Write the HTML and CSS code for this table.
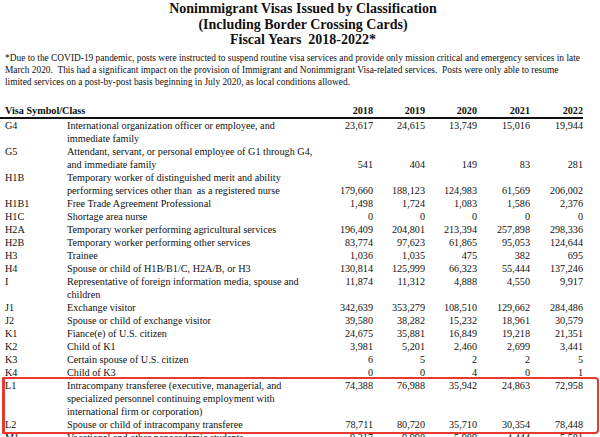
FILE: index.html
```html
<!DOCTYPE html>
<html>
<head>
<meta charset="utf-8">
<link rel="stylesheet" href="styles.css">
</head>
<body>
<div class="page">
  <h1 class="title">Nonimmigrant Visas Issued by Classification<br>(Including Border Crossing Cards)<br>Fiscal Years&nbsp;&nbsp;2018-2022*</h1>
  <p class="note">*Due to the COVID-19 pandemic, posts were instructed to suspend routine visa services and provide only mission critical and emergency services in late March 2020.&nbsp; This had a significant impact on the provision of Immigrant and Nonimmigrant Visa-related services.&nbsp; Posts were only able to resume limited services on a post-by-post basis beginning in July 2020, as local conditions allowed.</p>
  <table class="visas">
    <colgroup>
      <col class="c-code"><col class="c-desc"><col class="c-n1"><col class="c-n"><col class="c-n"><col class="c-n2"><col class="c-n2">
    </colgroup>
    <thead>
      <tr><th colspan="2" class="hl">Visa Symbol/Class</th><th>2018</th><th>2019</th><th>2020</th><th>2021</th><th>2022</th></tr>
    </thead>
    <tbody>
      <tr><td>G4</td><td>International organization officer or employee, and immediate family</td><td>23,617</td><td>24,615</td><td>13,749</td><td>15,016</td><td>19,944</td></tr>
      <tr class="low"><td>G5</td><td>Attendant, servant, or personal employee of G1 through G4, and immediate family</td><td>541</td><td>404</td><td>149</td><td>83</td><td>281</td></tr>
      <tr class="low"><td>H1B</td><td>Temporary worker of distinguished merit and ability performing services other than&nbsp; as a registered nurse</td><td>179,660</td><td>188,123</td><td>124,983</td><td>61,569</td><td>206,002</td></tr>
      <tr><td>H1B1</td><td>Free Trade Agreement Professional</td><td>1,498</td><td>1,724</td><td>1,083</td><td>1,586</td><td>2,376</td></tr>
      <tr><td>H1C</td><td>Shortage area nurse</td><td>0</td><td>0</td><td>0</td><td>0</td><td>0</td></tr>
      <tr><td>H2A</td><td>Temporary worker performing agricultural services</td><td>196,409</td><td>204,801</td><td>213,394</td><td>257,898</td><td>298,336</td></tr>
      <tr><td>H2B</td><td>Temporary worker performing other services</td><td>83,774</td><td>97,623</td><td>61,865</td><td>95,053</td><td>124,644</td></tr>
      <tr><td>H3</td><td>Trainee</td><td>1,036</td><td>1,035</td><td>475</td><td>382</td><td>695</td></tr>
      <tr><td>H4</td><td>Spouse or child of H1B/B1/C, H2A/B, or H3</td><td>130,814</td><td>125,999</td><td>66,323</td><td>55,444</td><td>137,246</td></tr>
      <tr><td>I</td><td>Representative of foreign information media, spouse and children</td><td>11,874</td><td>11,312</td><td>4,888</td><td>4,550</td><td>9,917</td></tr>
      <tr><td>J1</td><td>Exchange visitor</td><td>342,639</td><td>353,279</td><td>108,510</td><td>129,662</td><td>284,486</td></tr>
      <tr><td>J2</td><td>Spouse or child of exchange visitor</td><td>39,580</td><td>38,282</td><td>15,232</td><td>18,961</td><td>30,579</td></tr>
      <tr><td>K1</td><td>Fiance(e) of U.S. citizen</td><td>24,675</td><td>35,881</td><td>16,849</td><td>19,218</td><td>21,351</td></tr>
      <tr><td>K2</td><td>Child of K1</td><td>3,981</td><td>5,201</td><td>2,460</td><td>2,699</td><td>3,441</td></tr>
      <tr><td>K3</td><td>Certain spouse of U.S. citizen</td><td>6</td><td>5</td><td>2</td><td>2</td><td>5</td></tr>
      <tr><td>K4</td><td>Child of K3</td><td>0</td><td>0</td><td>4</td><td>0</td><td>1</td></tr>
      <tr><td>L1</td><td>Intracompany transferee (executive, managerial, and specialized personnel continuing employment with international firm or corporation)</td><td>74,388</td><td>76,988</td><td>35,942</td><td>24,863</td><td>72,958</td></tr>
      <tr><td>L2</td><td>Spouse or child of intracompany transferee</td><td>78,711</td><td>80,720</td><td>35,710</td><td>30,354</td><td>78,448</td></tr>
      <tr><td>M1</td><td>Vocational and other nonacademic students</td><td>9,317</td><td>9,998</td><td>5,989</td><td>4,444</td><td>5,581</td></tr>
    </tbody>
  </table>
  <div class="highlight"></div>
</div>
</body>
</html>
```
FILE: styles.css
```css
html, body {
  margin: 0;
  padding: 0;
  background: #fff;
}
.page {
  position: relative;
  width: 600px;
  height: 437px;
  overflow: hidden;
  font-family: "Liberation Serif", "Times New Roman", serif;
  color: #111;
}
.title {
  margin: 0;
  padding-top: 1px;
  padding-left: 6px;
  text-align: center;
  font-size: 14px;
  line-height: 15.5px;
  font-weight: bold;
}
.note {
  margin: 4px 0 0 0;
  padding: 0 16px 0 5px;
  font-size: 9.4px;
  line-height: 12px;
}
.visas {
  margin-top: 16px;
  border-collapse: collapse;
  table-layout: fixed;
  width: 583px;
  font-size: 10.2px;
  line-height: 13px;
}
.c-code { width: 67px; }
.c-desc { width: 246px; }
.c-n1 { width: 60px; }
.c-n { width: 52px; }
.c-n2 { width: 53px; }
.visas th {
  font-weight: bold;
  text-align: right;
  padding: 0;
  border-bottom: 2px solid #111;
  height: 13px;
  vertical-align: bottom;
}
.visas th.hl {
  text-align: left;
  padding-left: 5px;
}
.visas td {
  padding: 0;
  vertical-align: top;
  text-align: right;
}
.visas td:first-child {
  text-align: left;
  padding-left: 5px;
}
.visas td:nth-child(2) {
  text-align: left;
}
.visas tr.low td:nth-child(n+3) {
  vertical-align: bottom;
}
.highlight {
  position: absolute;
  left: 2px;
  top: 377px;
  width: 592px;
  height: 53px;
  border: 2px solid #e8392f;
  border-left-width: 3px;
  border-radius: 1px 4px 4px 1px;
}
```
